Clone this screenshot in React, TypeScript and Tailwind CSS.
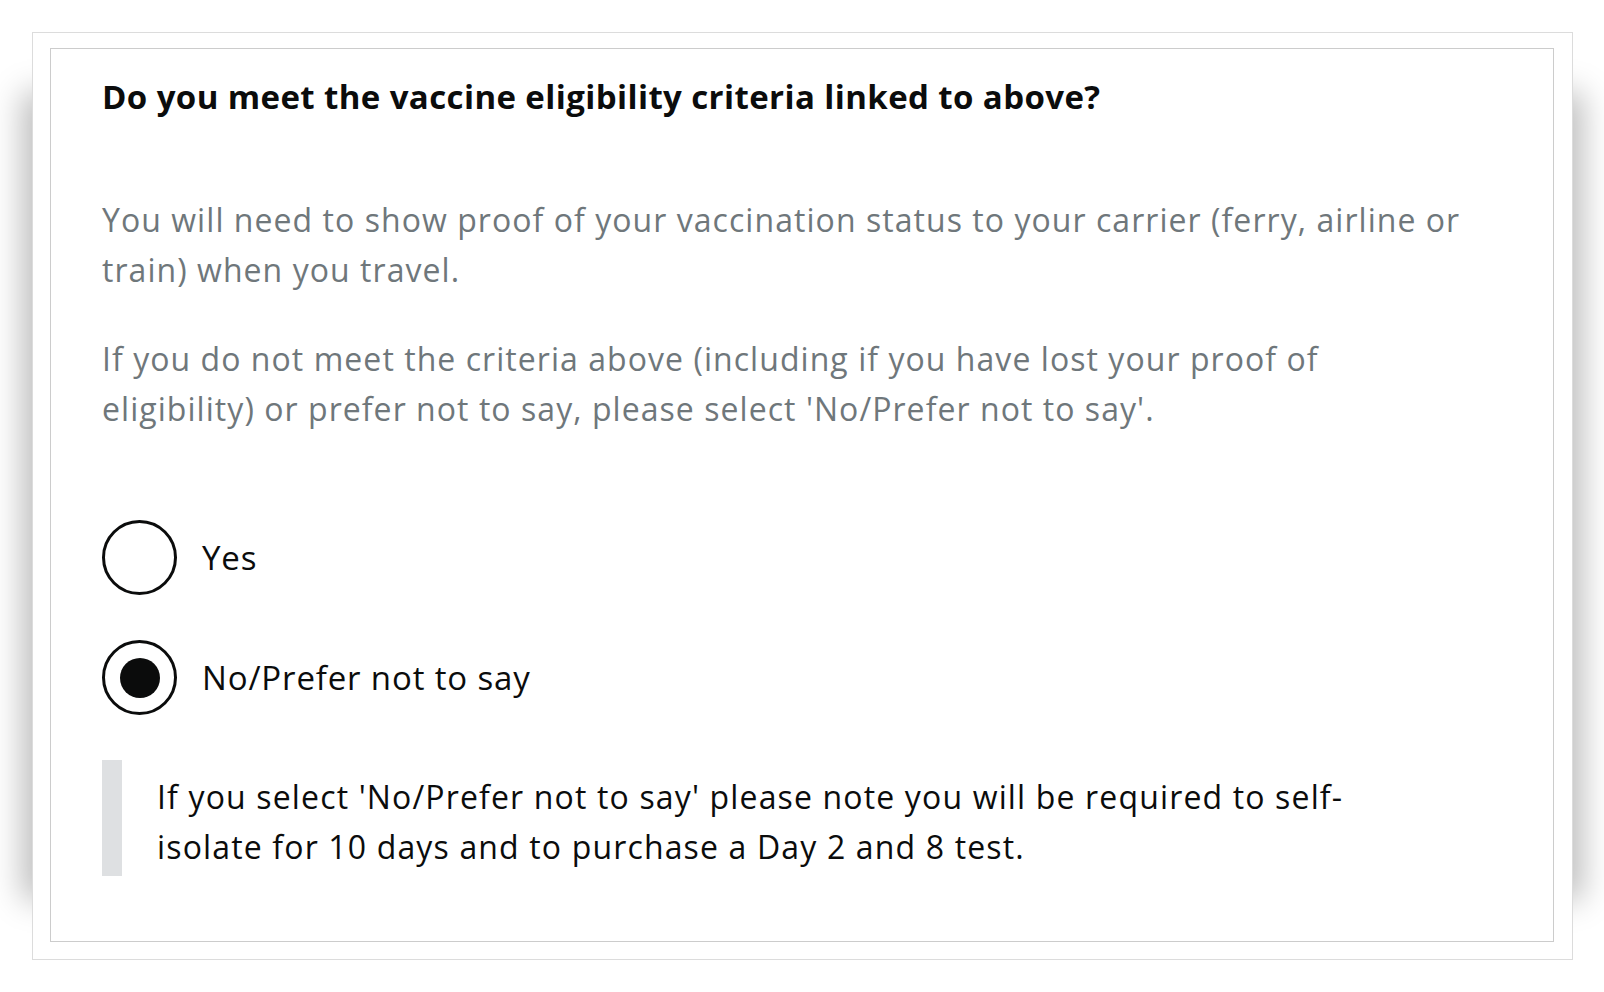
import type React from "react"

const Radio: React.FC<{ label: string; checked?: boolean }> = ({ label, checked }) => (
  <label className="flex items-center h-[75px]">
    <span className="w-[75px] h-[75px] rounded-full border-[3.5px] border-[#0b0c0c] flex items-center justify-center shrink-0">
      {checked && <span className="w-[40px] h-[40px] rounded-full bg-[#0b0c0c]" />}
    </span>
    <span className="ml-[25px] text-[33px] leading-[50px] tracking-[0.85px] text-[#0b0c0c]">{label}</span>
  </label>
)

export default function App() {
  return (
    <div className="w-full h-[992px] bg-white pt-[32px] pl-[32px] font-['Open_Sans',sans-serif]">
      <div className="w-[1541px] h-[928px] border border-[#dcdcdc] pt-[15px] pb-[17px] pl-[17px] pr-[18px] bg-white shadow-[-70px_0_30px_-60px_rgba(0,0,0,0.26),70px_0_30px_-60px_rgba(0,0,0,0.26)]">
        <div className="h-full border border-[#cccccc] pt-[28px] pl-[51px] pr-[30px]">
          <h1 className="text-[33px] leading-[40px] font-bold tracking-[0.4px] text-[#0b0c0c]">
            Do you meet the vaccine eligibility criteria linked to above?
          </h1>

          <div className="mt-[78px] text-[32px] leading-[50px] tracking-[1.05px] text-[#6f777b]">
            <p>
              You will need to show proof of your vaccination status to your carrier (ferry, airline or
              <br />
              train) when you travel.
            </p>
            <p className="mt-[39px]">
              If you do not meet the criteria above (including if you have lost your proof of
              <br />
              eligibility) or prefer not to say, please select 'No/Prefer not to say'.
            </p>
          </div>

          <div className="mt-[86px] flex flex-col gap-[45px]">
            <Radio label="Yes" />
            <Radio label="No/Prefer not to say" checked />
          </div>

          <div className="mt-[45px] border-l-[20px] border-[#dee0e2] pl-[35px] pt-[12px] pb-[4px] text-[32px] leading-[50px] tracking-[1.15px] text-[#0b0c0c]">
            If you select 'No/Prefer not to say' please note you will be required to self-
            <br />
            isolate for 10 days and to purchase a Day 2 and 8 test.
          </div>
        </div>
      </div>
    </div>
  )
}
